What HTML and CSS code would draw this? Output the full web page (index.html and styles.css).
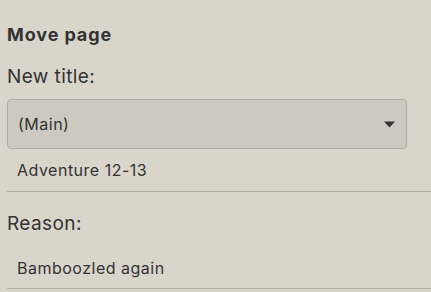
FILE: index.html
```html
<!DOCTYPE html>
<html>
<head>
<meta charset="utf-8">
<link rel="stylesheet" href="styles.css">
</head>
<body>
<div class="form">
  <div class="heading">Move page</div>
  <div class="label">New title:</div>
  <div class="select">
    <span class="select-text">(Main)</span>
    <svg class="caret" width="11" height="7" viewBox="0 0 11 7"><path d="M0 0.5 H11 L5.5 6.5 Z" fill="#333"/></svg>
  </div>
  <div class="input">Adventure 12-13</div>
  <div class="label label-reason">Reason:</div>
  <div class="input input-reason">Bamboozled again</div>
</div>
</body>
</html>
```
FILE: styles.css
```css
html, body {
  margin: 0;
  padding: 0;
  background: #d9d5cb;
}
body {
  font-family: Inter, "Noto Sans", sans-serif;
  color: #333;
}
.form {
  padding: 24px 0 0 7px;
  display: flex;
  flex-direction: column;
}
.heading {
  font-size: 18px;
  font-weight: 700;
  line-height: 21px;
  letter-spacing: 0.9px;
}
.label {
  font-size: 19px;
  line-height: 24px;
  margin-top: 20px;
  letter-spacing: 0.4px;
}
.select {
  margin-top: 10px;
  width: 400px;
  height: 50px;
  box-sizing: border-box;
  border: 1px solid #b3afa6;
  border-radius: 4px;
  background: #cdc8c0;
  display: flex;
  align-items: center;
  justify-content: space-between;
  padding: 0 11px 0 10px;
}
.select-text {
  font-size: 16px;
  line-height: 20px;
  letter-spacing: 0.5px;
}
.input {
  font-size: 16px;
  line-height: 20px;
  letter-spacing: 0.5px;
  padding: 11px 0 11px 10px;
  border-bottom: 1px solid #b3afa6;
}
.input-reason {
  margin-top: 11px;
  padding-bottom: 10px;
}
```
